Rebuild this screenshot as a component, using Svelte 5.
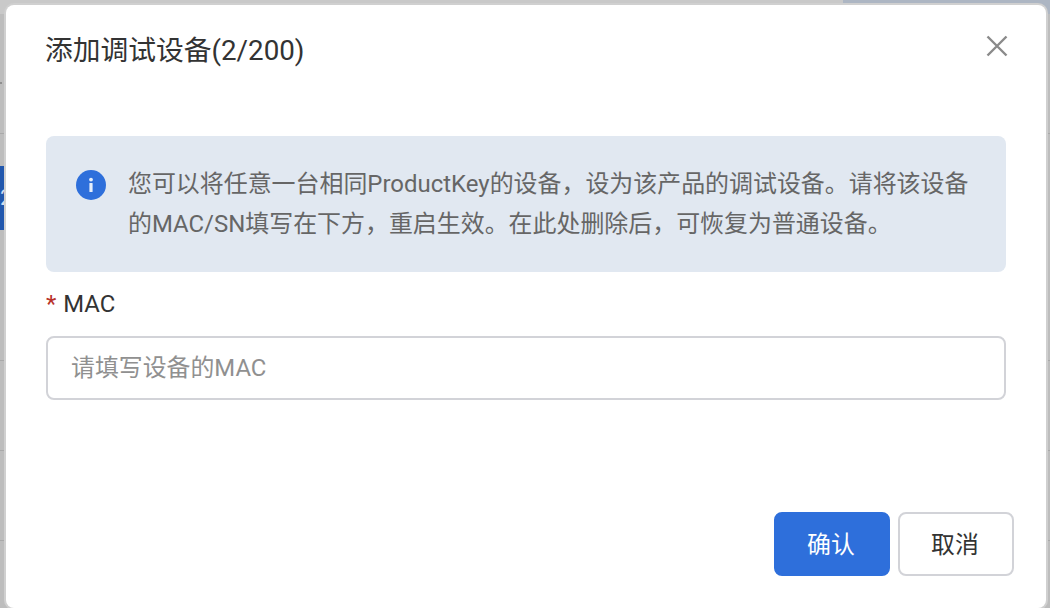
<script>
  const rowLines = [133, 360, 450, 540];
</script>

<div class="page">
  <div class="backdrop" aria-hidden="true">
    <div class="top-band"></div>
    <div class="top-tab"></div>
    <div class="tag">2</div>
    {#each rowLines as line}
      <div class="row-line" style="top: {line}px"></div>
    {/each}
    <div class="tick"></div>
  </div>

  <section class="modal">
    <header class="head">
      <h2>添加调试设备(2/200)</h2>
      <button class="close" aria-label="关闭">
        <svg width="22" height="22" viewBox="0 0 22 22"><path d="M1.5 1.5 20.5 20.5M20.5 1.5 1.5 20.5" stroke="#8a8a8a" stroke-width="2.4" fill="none"/></svg>
      </button>
    </header>

    <div class="notice">
      <svg class="info" width="30" height="30" viewBox="0 0 30 30">
        <circle cx="15" cy="15" r="15" fill="#2e6fdb"/>
        <rect x="13.4" y="13" width="3.2" height="9" rx="0.6" fill="#e6eefb"/>
        <circle cx="15" cy="9.6" r="1.9" fill="#e6eefb"/>
      </svg>
      <p>您可以将任意一台相同ProductKey的设备，设为该产品的调试设备。请将该设备的MAC/SN填写在下方，重启生效。在此处删除后，可恢复为普通设备。</p>
    </div>

    <label class="field">
      <span class="label"><i>*</i>MAC</span>
      <input type="text" placeholder="请填写设备的MAC" />
    </label>

    <footer class="foot">
      <button class="btn primary"><span>确认</span></button>
      <button class="btn"><span>取消</span></button>
    </footer>
  </section>
</div>

<style>
  :global(body) {
    margin: 0;
    background: #bdbdbd;
  }
  .page {
    position: relative;
    box-sizing: border-box;
    width: 1050px;
    height: 608px;
    overflow: hidden;
    padding: 5px 4px 0 6px;
    font-family: Roboto, "Noto Sans CJK SC", sans-serif;
  }
  .backdrop {
    position: absolute;
    inset: 0;
  }
  .top-band {
    position: absolute;
    left: 0;
    right: 0;
    top: 0;
    height: 14px;
    background: #c9c9c9;
  }
  .top-tab {
    position: absolute;
    left: 843px;
    right: 0;
    top: 0;
    height: 14px;
    background: #adb6c3;
  }
  .tag {
    position: absolute;
    left: 0;
    top: 166px;
    width: 4px;
    height: 64px;
    background: #2157ad;
    color: #cfdcf2;
    font-size: 22px;
    line-height: 64px;
    overflow: hidden;
  }
  .row-line {
    position: absolute;
    left: 0;
    right: 0;
    height: 1px;
    background: #a9a9a9;
  }
  .tick {
    position: absolute;
    left: 0;
    top: 82px;
    width: 2px;
    height: 2px;
    background: #8f8f8f;
  }
  .modal {
    position: relative;
    box-sizing: border-box;
    width: 1040px;
    height: 603px;
    background: #fff;
    border-radius: 8px;
    box-shadow: 0 0 0 2px #d0d0d0;
    display: flex;
    flex-direction: column;
    padding: 0 40px;
  }
  .head {
    display: flex;
    justify-content: space-between;
    align-items: flex-start;
    height: 131px;
  }
  h2 {
    margin: 0;
    padding-top: 26px;
    margin-left: -1px;
    font-size: 27.75px;
    line-height: 40px;
    font-weight: 400;
    color: #333;
  }
  .close {
    margin: 30px -2px 0 0;
    padding: 0;
    border: 0;
    background: none;
    display: flex;
  }
  .notice {
    box-sizing: border-box;
    height: 136px;
    background: #e1e8f1;
    border-radius: 8px;
    display: flex;
    align-items: flex-start;
    padding: 28px 30px 0 30px;
    gap: 22px;
  }
  .info {
    flex: none;
    margin-top: 6px;
  }
  .notice p {
    margin: 0;
    font-size: 23.95px;
    line-height: 40px;
    color: #666;
  }
  .field {
    display: flex;
    flex-direction: column;
  }
  .label {
    height: 64px;
    line-height: 64px;
    font-size: 23.9px;
    color: #333;
  }
  .label i {
    font-style: normal;
    color: #b8322a;
    margin-right: 7px;
  }
  input {
    box-sizing: border-box;
    height: 64px;
    width: 100%;
    border: 2px solid #d2d3d8;
    border-radius: 8px;
    padding: 0 23px;
    font: inherit;
    font-size: 23.9px;
    outline: none;
  }
  input::placeholder {
    color: #909090;
    opacity: 1;
  }
  .foot {
    margin-top: auto;
    margin-right: -8px;
    margin-bottom: 32px;
    display: flex;
    justify-content: flex-end;
    gap: 8px;
  }
  .btn {
    box-sizing: border-box;
    width: 116px;
    height: 64px;
    border: 2px solid #d2d3d8;
    border-radius: 8px;
    background: #fff;
    color: #333;
    font: inherit;
    font-size: 23.9px;
    padding: 0 2px 4px 0;
  }
  .primary {
    background: #2e6fdb;
    border-color: #2e6fdb;
    color: #fff;
  }
</style>
